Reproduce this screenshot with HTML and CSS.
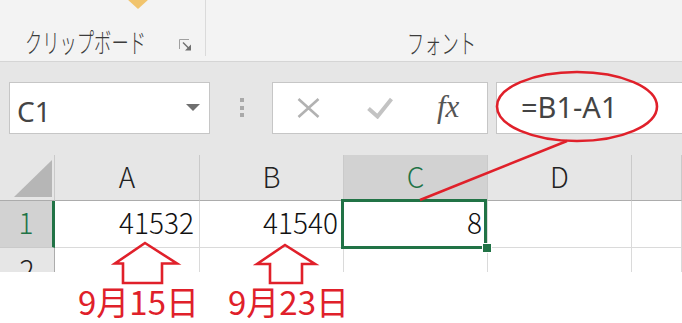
FILE: index.html
```html
<!DOCTYPE html>
<html lang="ja">
<head>
<meta charset="utf-8">
<title>Excel</title>
<link rel="stylesheet" href="styles.css">
</head>
<body>
<div class="page">
  <header class="ribbon">
    <div class="group group-clip">
      <svg class="paste-tip" width="22" height="10" viewBox="0 0 22 10"><polygon points="0,0 22,0 11,10" fill="#f1c46d"/></svg>
      <div class="group-foot">
        <span class="glabel glabel-clip">クリップボード</span>
        <svg class="launcher" width="14" height="13" viewBox="0 0 14 13">
          <path d="M1.5 11 V1.5 H11" fill="none" stroke="#a0a0a0" stroke-width="1"/>
          <path d="M5 4.5 L11 10.5" stroke="#707070" stroke-width="1.4"/>
          <polygon points="13,12.5 13,6.5 7,12.5" fill="#707070"/>
        </svg>
      </div>
    </div>
    <div class="group group-font">
      <div class="group-foot">
        <span class="glabel glabel-font">フォント</span>
      </div>
    </div>
  </header>

  <div class="fbar">
    <div class="namebox">
      <span class="nb-text">C1</span>
      <svg class="nb-arrow" width="14" height="7" viewBox="0 0 14 7"><polygon points="0,0 14,0 7,7" fill="#6f6f6f"/></svg>
    </div>
    <div class="grip"><i></i><i></i><i></i></div>
    <div class="fxbtns">
      <svg class="ic-x" width="23" height="20" viewBox="0 0 23 20">
        <path d="M1.5 1 L21.5 19 M21.5 1 L1.5 19" stroke="#b2b2b2" stroke-width="2.6" fill="none"/>
      </svg>
      <svg class="ic-check" width="26" height="22" viewBox="0 0 26 22">
        <path d="M1.5 11.5 L10.5 19.5 L24.5 2" stroke="#c3c3c3" stroke-width="4" fill="none"/>
      </svg>
      <span class="ic-fx">fx</span>
    </div>
    <div class="formula">=B1-A1</div>
  </div>

  <div class="sheet">
    <div class="hdr hdr-corner">
      <svg width="54" height="45" viewBox="0 0 54 45"><polygon points="52,5 52,42 14,42" fill="#b6b6b6"/></svg>
    </div>
    <div class="hdr hdr-col">A</div>
    <div class="hdr hdr-col">B</div>
    <div class="hdr hdr-col is-sel">C</div>
    <div class="hdr hdr-col">D</div>
    <div class="hdr hdr-col"></div>

    <div class="hdr hdr-row is-sel row-active">1</div>
    <div class="cell">41532</div>
    <div class="cell">41540</div>
    <div class="cell active">8</div>
    <div class="cell"></div>
    <div class="cell"></div>

    <div class="hdr hdr-row">2</div>
    <div class="cell"></div>
    <div class="cell"></div>
    <div class="cell"></div>
    <div class="cell"></div>
    <div class="cell"></div>
  </div>

  <div class="labels">
    <span class="lbl lbl-first">9月15日</span>
    <span class="lbl">9月23日</span>
  </div>

  <svg class="annot" width="682" height="323" viewBox="0 0 682 323">
    <g fill="none" stroke="#e0202a" stroke-width="2.6" stroke-linejoin="miter">
      <ellipse cx="577" cy="106.5" rx="80" ry="34.5"/>
      <line x1="567" y1="141" x2="420" y2="200"/>
      <polygon points="145,243 177,263.5 162,263.5 162,283 123,283 123,263.5 115,263.5"/>
      <polygon points="285,245 315,264 302,264 302,283 270,283 270,264 257,264"/>
    </g>
  </svg>
</div>
</body>
</html>
```

FILE: styles.css
```css
body {
  margin: 0;
}

.page {
  position: relative;
  width: 682px;
  height: 323px;
  overflow: hidden;
  background: #ffffff;
  font-family: "Noto Sans CJK JP", "Noto Sans", sans-serif;
}

/* ribbon */
.ribbon {
  display: flex;
  height: 61px;
  background: #f3f3f3;
  border-bottom: 1px solid #d5d5d5;
}

.group {
  height: 56px;
  box-sizing: border-box;
  display: flex;
  flex-direction: column;
}

.group-clip {
  width: 206px;
  border-right: 1px solid #dadada;
}

.group-font {
  flex: 1;
}

.paste-tip {
  display: block;
  margin-left: 127px;
}

.group-foot {
  display: flex;
  align-items: flex-start;
  margin-top: 19px;
  padding-left: 25px;
}

.group-font .group-foot {
  margin-top: 29px;
  padding-left: 201px;
}

.glabel {
  display: inline-block;
  white-space: nowrap;
  font-size: 27px;
  line-height: 28px;
  font-weight: 300;
  color: #3c3c3c;
  transform: scaleX(0.64);
  transform-origin: left top;
}

.glabel-clip {
  width: 121px;
}

.glabel-font {
  width: 68px;
}

.launcher {
  display: block;
  margin-left: auto;
  margin-right: 13px;
  margin-top: 10px;
}

/* formula bar */
.fbar {
  height: 93px;
  box-sizing: border-box;
  padding-top: 20px;
  background: #e6e6e6;
  display: flex;
  align-items: flex-start;
}

.namebox {
  margin-left: 9px;
  width: 201px;
  height: 52px;
  box-sizing: border-box;
  background: #ffffff;
  border: 1px solid #c6c6c6;
  display: flex;
  align-items: center;
  padding-left: 7px;
  padding-right: 9px;
}

.nb-text {
  flex: 1;
  font-family: "Noto Sans", sans-serif;
  font-size: 28px;
  line-height: 1;
  color: #444444;
  padding-top: 6px;
}

.nb-arrow {
  display: block;
  margin-top: -2px;
}

.grip {
  width: 62px;
  display: flex;
  flex-direction: column;
  align-items: center;
  gap: 3.5px;
  padding-top: 16px;
  padding-left: 2px;
  box-sizing: border-box;
}

.grip i {
  display: block;
  width: 4px;
  height: 4px;
  background: #a9a9a9;
}

.fxbtns {
  width: 216px;
  height: 52px;
  box-sizing: border-box;
  background: #ffffff;
  border: 1px solid #c6c6c6;
  display: flex;
  align-items: center;
  padding-left: 24px;
}

.ic-x {
  display: block;
}

.ic-check {
  display: block;
  margin-left: 47px;
}

.ic-fx {
  margin-left: 44px;
  font-family: "Liberation Serif", serif;
  font-style: italic;
  font-size: 31px;
  line-height: 1;
  color: #555555;
  padding-bottom: 3px;
}

.formula {
  flex: 1;
  margin-left: 8px;
  margin-right: -2px;
  height: 52px;
  box-sizing: border-box;
  background: #ffffff;
  border: 1px solid #c6c6c6;
  padding-left: 24px;
  padding-bottom: 4px;
  display: flex;
  align-items: center;
  font-family: "Noto Sans", sans-serif;
  font-size: 29px;
  line-height: 1;
  color: #444444;
}

/* sheet */
.sheet {
  display: grid;
  grid-template-columns: 55px 145px 144px 144px 144px 1fr;
  grid-template-rows: 46px 47px 47px;
  height: 117px;
  overflow: hidden;
}

.hdr {
  background: #e6e6e6;
  box-sizing: border-box;
  border-right: 1px solid #cacaca;
  border-bottom: 1px solid #acacac;
  display: flex;
  align-items: center;
  justify-content: center;
  font-size: 28px;
  font-weight: 300;
  line-height: 1;
  color: #222222;
  padding-bottom: 4px;
}

.hdr-corner {
  padding: 0;
  align-items: flex-start;
  justify-content: flex-start;
}

.hdr-corner svg {
  display: block;
}

.hdr-row {
  border-right-color: #acacac;
  border-bottom-color: #cacaca;
}

.is-sel {
  background: #d2d2d2;
  color: #217346;
}

.row-active {
  border-right: 3px solid #217346;
}

.cell {
  background: #ffffff;
  box-sizing: border-box;
  border-right: 1px solid #dadada;
  border-bottom: 1px solid #dadada;
  display: flex;
  align-items: center;
  justify-content: flex-end;
  padding-right: 5px;
  padding-bottom: 5px;
  font-size: 28px;
  font-weight: 300;
  line-height: 1;
  color: #111111;
}

.active {
  position: relative;
}

.active::after {
  content: "";
  position: absolute;
  left: -3px;
  top: -2px;
  right: 0;
  bottom: -2px;
  border: 3px solid #217346;
}

.active::before {
  content: "";
  position: absolute;
  left: 138px;
  top: 42px;
  width: 8px;
  height: 8px;
  background: #217346;
  border: 1px solid #ffffff;
  z-index: 1;
}

/* labels */
.labels {
  display: flex;
  margin-top: 13px;
  padding-left: 78px;
  color: #e0202a;
  font-size: 33px;
  line-height: 33px;
  white-space: nowrap;
}

.lbl-first {
  width: 150px;
}

.annot {
  position: absolute;
  left: 0;
  top: 0;
  pointer-events: none;
}
```
